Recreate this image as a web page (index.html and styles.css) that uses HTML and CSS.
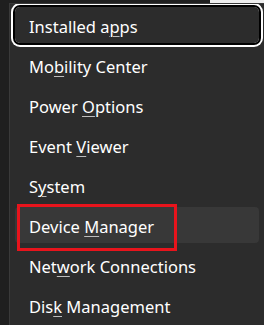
FILE: index.html
```html
<!DOCTYPE html>
<html>
<head>
<meta charset="utf-8">
<link rel="stylesheet" href="styles.css">
</head>
<body>
<div class="topbar"><div class="top-dark"></div><div class="top-light"></div></div>
<div class="menu">
  <div class="item focused">Installed a<u>p</u>ps</div>
  <div class="item">Mo<u>b</u>ility Center</div>
  <div class="item">Power <u>O</u>ptions</div>
  <div class="item">Event <u>V</u>iewer</div>
  <div class="item">S<u>y</u>stem</div>
  <div class="item hover">Device <u>M</u>anager<span class="mark"></span></div>
  <div class="item">Net<u>w</u>ork Connections</div>
  <div class="item">Dis<u>k</u> Management</div>
</div>
</body>
</html>
```
FILE: styles.css
```css
html, body {
  margin: 0;
  padding: 0;
}
body {
  width: 264px;
  height: 325px;
  overflow: hidden;
  background: #1f1f1f;
  font-family: "Noto Sans", "Open Sans", sans-serif;
  color: #ffffff;
  display: flex;
  flex-direction: column;
}
.topbar {
  display: flex;
  height: 3px;
  flex: none;
}
.top-dark {
  flex: 1;
  background: #1f1f1f;
}
.top-light {
  width: 54px;
  background: #eeeeee;
}
.menu {
  flex: 1;
  min-height: 0;
  overflow: hidden;
  margin-left: 9px;
  border-left: 1px solid #3a3a3a;
  border-top: 1px solid #3a3a3a;
  background: #2c2c2c;
  padding: 3px 5px 0 5px;
  display: flex;
  flex-direction: column;
  gap: 4px;
}
.item {
  flex: none;
  position: relative;
  height: 36px;
  line-height: 40px;
  padding-left: 14px;
  border-radius: 4px;
  font-size: 16.5px;
  white-space: nowrap;
}
.item u {
  text-decoration-color: #bdbdbd;
  text-decoration-thickness: 1px;
  text-underline-offset: 3px;
}
.focused {
  box-shadow: 0 0 0 2px #000000, 0 0 0 4px #ffffff;
  border-radius: 5px;
}
.hover {
  background: #383838;
}
.mark {
  position: absolute;
  left: 2px;
  top: -3px;
  width: 154px;
  height: 41px;
  border: 3px solid #e8141c;
}
```
